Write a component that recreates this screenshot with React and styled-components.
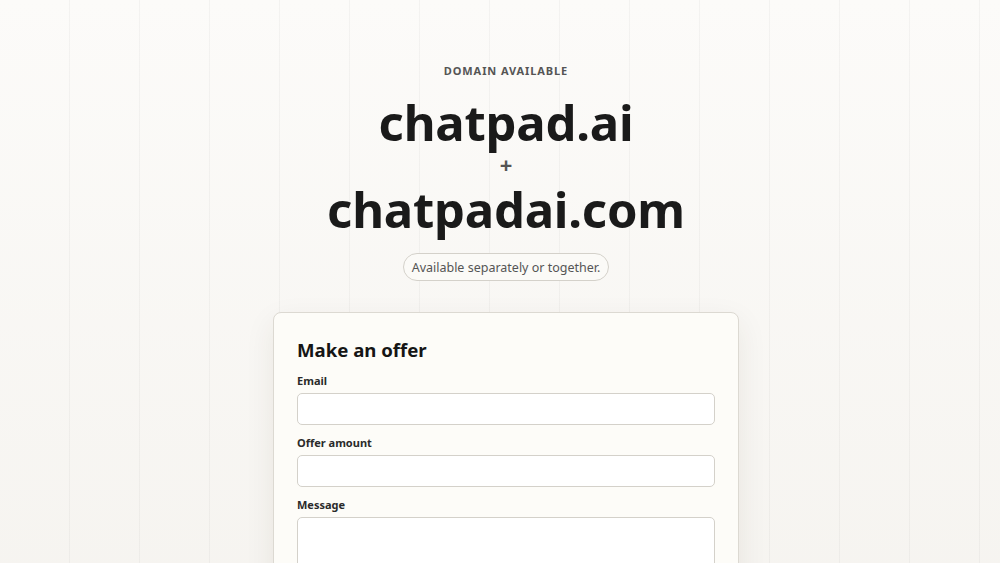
import styled, { createGlobalStyle } from "styled-components";

const GlobalStyle = createGlobalStyle`
  html, body {
    margin: 0;
    padding: 0;
    height: 100%;
  }
  body {
    font-family: "Noto Sans", "Open Sans", sans-serif;
    color: #1a1a1a;
    background: #f5f3ef;
    overflow: hidden;
  }
`;

const Page = styled.main`
  min-height: 563px;
  box-sizing: border-box;
  padding: 63px 0 0 12px;
  display: flex;
  flex-direction: column;
  align-items: center;
  background-image:
    repeating-linear-gradient(
      to right,
      transparent 0,
      transparent 69px,
      rgba(0, 0, 0, 0.035) 69px,
      rgba(0, 0, 0, 0.035) 70px
    ),
    linear-gradient(to bottom, #fcfbf9 0%, #f5f3ef 100%);
`;

const Eyebrow = styled.div`
  font-size: 11px;
  font-weight: 700;
  letter-spacing: 0.9px;
  color: #555;
  line-height: 16px;
`;

const Domain = styled.h1`
  margin: ${(props) => (props.first ? "17px 0 0" : "0")};
  font-size: 49px;
  font-weight: 700;
  letter-spacing: -0.2px;
  line-height: 52px;
  color: #1a1a1a;
`;

const Plus = styled.div`
  font-size: 22px;
  font-weight: 700;
  color: #555;
  line-height: 22px;
  margin: 5px 0 8px;
`;

const Pill = styled.div`
  margin-top: 18px;
  padding: 0 8px;
  height: 28px;
  box-sizing: border-box;
  display: flex;
  align-items: center;
  border: 1px solid #d4d1ca;
  border-radius: 14px;
  font-size: 12.5px;
  color: #555;
  background: #fbfaf7;
`;

const Card = styled.form`
  margin-top: 31px;
  width: 466px;
  box-sizing: border-box;
  padding: 24px 23px 40px;
  background: #fdfcf8;
  border: 1px solid #dcd9d2;
  border-radius: 8px;
  box-shadow: 0 10px 30px rgba(60, 50, 30, 0.08);
`;

const Title = styled.h2`
  margin: 0 0 8px;
  font-size: 18.6px;
  font-weight: 700;
  line-height: 26px;
  color: #151515;
`;

const Field = styled.label`
  display: flex;
  flex-direction: column;
  margin-top: 10px;
`;

const Label = styled.span`
  font-size: 11px;
  font-weight: 700;
  line-height: 16px;
  color: #2a2a2a;
  margin-bottom: 4px;
`;

const Input = styled.input`
  height: 32px;
  box-sizing: border-box;
  border: 1px solid #d4d1ca;
  border-radius: 5px;
  background: #fff;
  font: inherit;
  padding: 0 10px;
`;

const TextArea = styled.textarea`
  height: 90px;
  box-sizing: border-box;
  border: 1px solid #d4d1ca;
  border-radius: 5px;
  background: #fff;
  font: inherit;
  padding: 8px 10px;
  resize: none;
`;

export default function App() {
  return (
    <>
      <GlobalStyle />
      <Page>
        <Eyebrow>DOMAIN AVAILABLE</Eyebrow>
        <Domain first>chatpad.ai</Domain>
        <Plus>+</Plus>
        <Domain>chatpadai.com</Domain>
        <Pill>Available separately or together.</Pill>
        <Card>
          <Title>Make an offer</Title>
          <Field>
            <Label>Email</Label>
            <Input type="email" />
          </Field>
          <Field>
            <Label>Offer amount</Label>
            <Input type="text" />
          </Field>
          <Field>
            <Label>Message</Label>
            <TextArea />
          </Field>
        </Card>
      </Page>
    </>
  );
}
